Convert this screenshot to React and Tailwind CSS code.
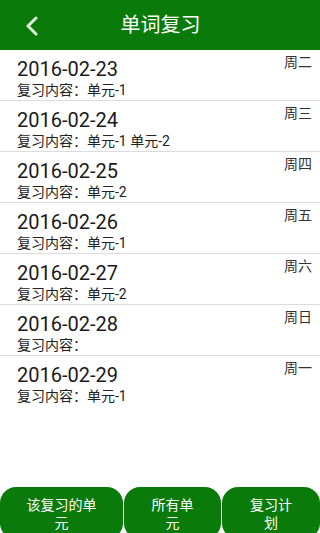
import React from "react";

const reviews = [
    { date: "2016-02-23", week: "周二", content: "单元-1" },
    { date: "2016-02-24", week: "周三", content: "单元-1 单元-2" },
    { date: "2016-02-25", week: "周四", content: "单元-2" },
    { date: "2016-02-26", week: "周五", content: "单元-1" },
    { date: "2016-02-27", week: "周六", content: "单元-2" },
    { date: "2016-02-28", week: "周日", content: "" },
    { date: "2016-02-29", week: "周一", content: "单元-1" },
];

const tabs = [
    { label: "该复习的单元", w: "w-[123px]" },
    { label: "所有单元", w: "w-[97px]" },
    { label: "复习计划", w: "w-[98px]" },
];

export default function App() {
    return (
        <div
            className="w-[320px] h-[533px] bg-white flex flex-col overflow-hidden"
            style={{ fontFamily: "Roboto, 'Noto Sans CJK SC', sans-serif" }}
        >
            {/* Title bar */}
            <div className="h-[50px] bg-[#0a7b0a] flex items-center relative shrink-0">
                <svg
                    className="absolute left-[24px] top-[16px]"
                    width="16"
                    height="20"
                    viewBox="0 0 16 20"
                    fill="none"
                >
                    <path
                        d="M12 2 L4 10 L12 18"
                        stroke="#dff3df"
                        strokeWidth="3"
                        strokeLinecap="round"
                        strokeLinejoin="round"
                    />
                </svg>
                <div className="w-full text-center text-white text-[20px] pl-[1px]">
                    单词复习
                </div>
            </div>

            {/* Review list */}
            <div className="flex-1">
                {reviews.map((r, i) => (
                    <div
                        key={r.date}
                        className={`h-[51px] flex justify-between pl-[17px] pr-[8px] ${
                            i < reviews.length - 1
                                ? "border-b-[1.5px] border-[#dcdcdc]"
                                : ""
                        }`}
                    >
                        <div className="flex flex-col">
                            <div className="text-[20px] leading-[22px] text-[#1a1a1a] mt-[8px]">
                                {r.date}
                            </div>
                            <div className="text-[14px] leading-[18px] text-[#222] mt-[1px]">
                                复习内容：{r.content}
                            </div>
                        </div>
                        <div className="text-[14px] leading-[18px] text-[#333] mt-[3px]">
                            {r.week}
                        </div>
                    </div>
                ))}
            </div>

            {/* Bottom tabs */}
            <div className="flex h-[46px] shrink-0 gap-[1px] overflow-hidden">
                {tabs.map((t) => (
                    <div
                        key={t.label}
                        className={`${t.w} h-[52px] shrink-0 bg-[#0a7b0a] rounded-[16px] flex justify-center pt-[9px] px-[24px]`}
                    >
                        <div className="text-white text-[14px] leading-[18px] text-center">
                            {t.label}
                        </div>
                    </div>
                ))}
            </div>
        </div>
    );
}
